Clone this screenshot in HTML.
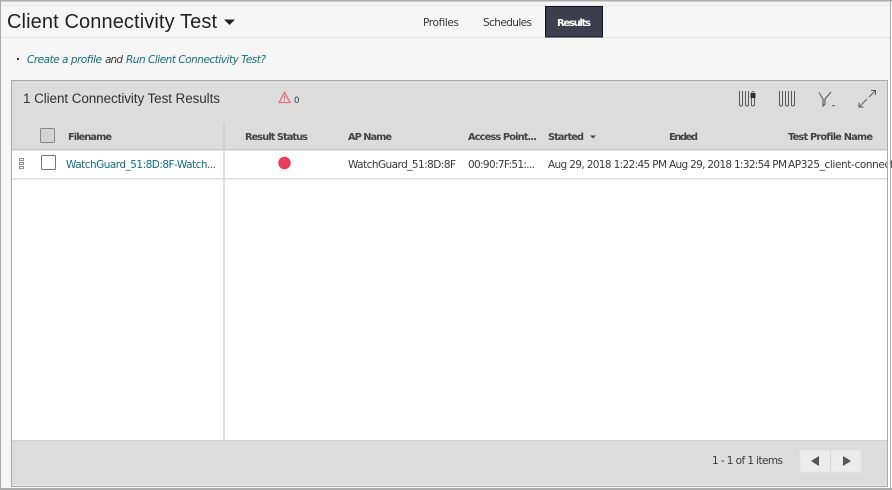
<!DOCTYPE html>
<html><head><meta charset="utf-8"><style>
html,body{margin:0;padding:0;width:892px;height:490px;overflow:hidden;background:#fff}
svg{display:block}
text{font-family:"DejaVu Sans","Liberation Sans",sans-serif;font-size:10.500px;fill:#3a3a3a}
.h{font-weight:bold;fill:#444;font-size:9.800px}
.l{fill:#10707f}
.t{font-family:"Liberation Sans",sans-serif}
</style></head><body>
<svg width="892" height="490" viewBox="0 0 892 490">
<rect width="892" height="490" fill="#fff"/>
<rect x="1" y="1" width="889" height="487" fill="#f6f6f6"/>
<rect x="11" y="80" width="877" height="406" fill="#fff"/>
<rect x="0" y="0" width="892" height="1.500" fill="#ababab"/>
<rect x="0" y="0" width="1" height="490" fill="#ababab"/>
<rect x="890" y="0" width="1" height="490" fill="#ababab"/>
<rect x="0" y="488" width="892" height="2" fill="#ababab"/>
<rect x="1" y="5" width="889" height="1" fill="#e6e6e6"/>
<rect x="1" y="37" width="889" height="1" fill="#e4e4e4"/>

<text class="t" x="7" y="28" style="font-size:20px;fill:#222" textLength="210">Client Connectivity Test</text>
<path d="M224 19.500h11l-5.500 5.500z" fill="#222"/>

<text x="423" y="26" textLength="36">Profiles</text>
<text x="483" y="26" textLength="49">Schedules</text>
<rect x="545.500" y="6.500" width="57" height="30.500" fill="#3e3e4e" stroke="#15151c" stroke-width="1"/>
<text x="557" y="26" textLength="34" style="fill:#fff;font-weight:bold;font-size:10px">Results</text>

<rect x="17" y="58" width="2" height="2" fill="#333"/>
<text x="27" y="63" textLength="75" class="l" font-style="italic">Create a profile</text>
<text x="105" y="63" textLength="18" font-style="italic">and</text>
<text x="126" y="63" textLength="140" class="l" font-style="italic">Run Client Connectivity Test?</text>

<rect x="11.500" y="80.500" width="876" height="406" fill="none" stroke="#aaa"/>
<rect x="12" y="81" width="875" height="69" fill="#dcdcdc"/>
<rect x="12" y="149" width="875" height="1.500" fill="#c8c8c8"/>
<text class="t" x="23" y="103" style="font-size:13.500px;fill:#333" textLength="197">1 Client Connectivity Test Results</text>

<path d="M284.500 92.500l5.500 10h-11z" fill="none" stroke="#ee6a7c" stroke-width="1.300"/>
<path d="M284.500 96v3.500M284.500 100.300v1" stroke="#ee5a6e"/>
<text x="294" y="103" style="font-size:8.500px">0</text>

<g fill="none" stroke="#5a5a5a" stroke-width="1">
<path d="M739.500 91v13.500q0 1.500 1.500 1.500t1.500-1.500v-13.500"/>
<path d="M745.500 91v13.500q0 1.500 1.500 1.500t1.500-1.500v-13.500"/>
<path d="M751.500 98v6.500q0 1.500 1.500 1.500t1.500-1.500v-6.500"/>
<path d="M751.500 92.500q1.500-2 3 0"/>
<path d="M779.500 91v13.500q0 1.500 1.500 1.500t1.500-1.500v-13.500"/>
<path d="M785.500 91v13.500q0 1.500 1.500 1.500t1.500-1.500v-13.500"/>
<path d="M791.500 91v13.500q0 1.500 1.500 1.500t1.500-1.500v-13.500"/>
<path d="M819 92.500l4 6.500v7l2-2v-5l6-7" stroke-width="1.100"/>
<path d="M859 107l8-8M859 102.500v4.500h4.500M869 97l6-6M871 90.500h4.500v4.500"/>
</g>
<rect x="750.500" y="93" width="5" height="5" fill="#333"/>
<rect x="832" y="105" width="3" height="1.200" fill="#777"/>

<rect x="40.500" y="128.500" width="14" height="14" rx="1" fill="#d4d4d4" stroke="#888"/>
<text class="h" x="68" y="140" textLength="44">Filename</text>
<text class="h" x="245" y="140" textLength="63">Result Status</text>
<text class="h" x="348" y="140" textLength="44">AP Name</text>
<text class="h" x="468" y="140" textLength="69">Access Point...</text>
<text class="h" x="548" y="140" textLength="36">Started</text>
<path d="M590 135.500h6l-3 3z" fill="#444"/>
<text class="h" x="669" y="140" textLength="29">Ended</text>
<text class="h" x="788" y="140" textLength="85">Test Profile Name</text>

<rect x="223" y="123" width="2" height="317" fill="#dfdfdf"/>
<rect x="223" y="123" width="2" height="27" fill="#cfcfcf"/>
<rect x="12" y="178" width="875" height="1.500" fill="#dedede"/>

<g fill="none" stroke="#777" stroke-width="0.800">
<rect x="19.500" y="158.500" width="4" height="2.200"/>
<rect x="19.500" y="162.500" width="4" height="2.200"/>
<rect x="19.500" y="166.500" width="4" height="2.200"/>
</g>
<rect x="41.500" y="155.500" width="14" height="14" rx="1" fill="#fff" stroke="#777"/>
<text class="l" x="66" y="168" textLength="150">WatchGuard_51:8D:8F-Watch...</text>
<circle cx="284.500" cy="163" r="6" fill="#ef3b55" stroke="#e2304a" stroke-width="0.500"/>
<text x="348" y="168" textLength="108">WatchGuard_51:8D:8F</text>
<text x="468" y="168" textLength="67">00:90:7F:51:...</text>
<text x="548" y="168" textLength="119">Aug 29, 2018 1:22:45 PM</text>
<text x="669" y="168" textLength="118">Aug 29, 2018 1:32:54 PM</text>
<text x="788" y="168" textLength="106">AP325_client-connect</text>
<rect x="887" y="150" width="3" height="30" fill="#fff"/>
<rect x="887" y="80" width="1" height="407" fill="#aaa"/>
<rect x="888" y="80" width="2" height="408" fill="#fff"/>

<rect x="12" y="440" width="875" height="45" fill="#dcdcdc"/>
<rect x="12" y="440" width="875" height="1" fill="#d0d0d0"/>
<rect x="12" y="485" width="875" height="1" fill="#ececec"/>
<text x="712" y="464" textLength="71">1 - 1 of 1 items</text>
<rect x="800" y="450" width="61" height="22" fill="#ececec" stroke="#e2e2e2"/>
<rect x="830" y="450" width="1" height="22" fill="#d6d6d6"/>
<path d="M819 456v10l-8-5z" fill="#555"/>
<path d="M843 456v10l8-5z" fill="#555"/>
</svg>
</body></html>
